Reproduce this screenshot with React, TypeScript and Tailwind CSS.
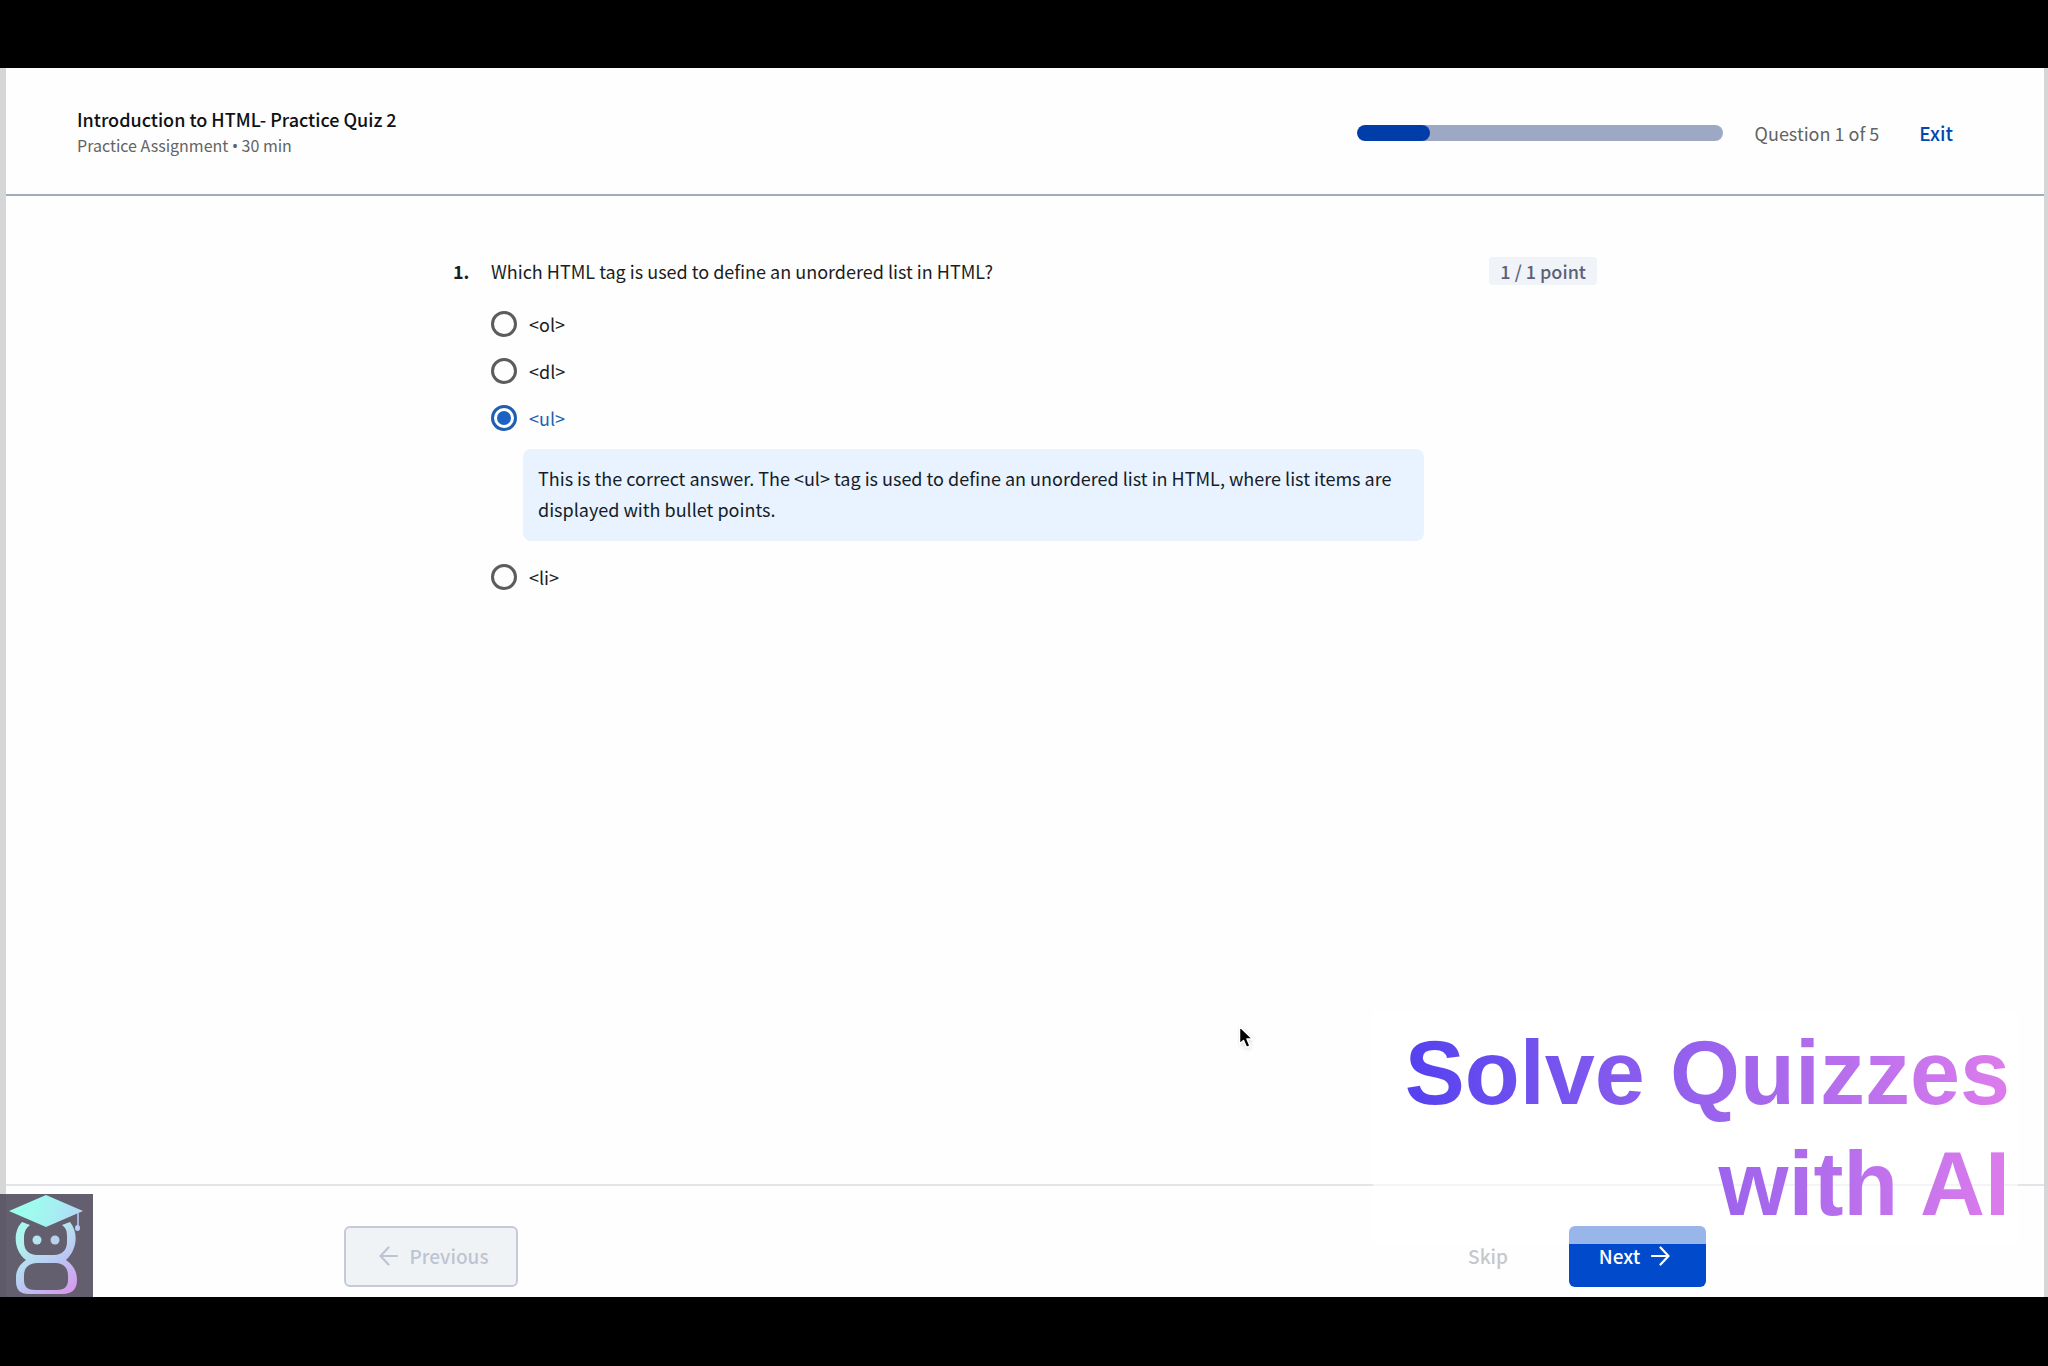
import React from "react";

type Option = { id: string; label: string; feedback?: string };

const OPTIONS: Option[] = [
  { id: "ol", label: "<ol>" },
  { id: "dl", label: "<dl>" },
  {
    id: "ul",
    label: "<ul>",
    feedback:
      "This is the correct answer. The <ul> tag is used to define an unordered list in HTML, where list items are displayed with bullet points.",
  },
  { id: "li", label: "<li>" },
];

function Arrow({ flip = false }: { flip?: boolean }) {
  return (
    <svg
      viewBox="0 0 20 20"
      className={flip ? "size-5 rotate-180" : "size-5"}
      fill="none"
      stroke="currentColor"
      strokeWidth="2.2"
      strokeLinecap="round"
      strokeLinejoin="round"
      aria-hidden="true"
    >
      <path d="M2 10H18M10.500 1.500L18.500 10L10.500 18.500" />
    </svg>
  );
}

function Header() {
  return (
    <header className="flex h-32 items-center justify-between border-b-2 border-[#a0abbb] pr-[91px] pl-[71px]">
      <div>
        <h1 className="leading-7 font-medium text-[#0f1114]">Introduction to HTML- Practice Quiz 2</h1>
        <p className="text-base leading-6 text-[#636363]">
          Practice Assignment <span className="font-['Noto_Sans',sans-serif]">•</span> 30 min
        </p>
      </div>
      <div className="flex items-center pt-1 leading-7">
        <div
          role="progressbar"
          aria-label="Quiz progress"
          aria-valuenow={1}
          aria-valuemin={0}
          aria-valuemax={5}
          className="h-4 w-[366px] overflow-hidden rounded-full bg-[#9ca8c4]"
        >
          <div className="h-full w-1/5 rounded-full bg-[#003da8]" />
        </div>
        <span className="ml-8 text-[#636363]">Question 1 of 5</span>
        <a href="#exit" className="ml-10 text-[19px] font-medium text-[#0048b0]">
          Exit
        </a>
      </div>
    </header>
  );
}

function Answer({ option, checked, onSelect }: { option: Option; checked: boolean; onSelect: () => void }) {
  return (
    <div>
      <label htmlFor={option.id} className={checked ? "flex items-center gap-3 text-[#1f5fb0]" : "flex items-center gap-3"}>
        <input
          id={option.id}
          type="radio"
          name="answer"
          checked={checked}
          onChange={onSelect}
          className="grid size-[26px] appearance-none place-items-center rounded-full border-[3px] border-[#5c5c5c] checked:border-[#1f5fb0] checked:before:size-3.5 checked:before:rounded-full checked:before:bg-[#1d61c4] checked:before:content-['']"
        />
        {option.label}
      </label>
      {option.feedback && (
        <p className="mt-4 mr-[173px] mb-1 ml-8 rounded-lg bg-[#e8f3ff] px-[15px] pt-3.5 pb-4 leading-[31px] text-[#161c28]">
          {option.feedback}
        </p>
      )}
    </div>
  );
}

function BotLogo() {
  return (
    <div className="absolute bottom-0 -left-1.5 h-[103px] w-[93px] bg-[#4d4759]/87">
      <svg viewBox="0 0 93 103" className="size-full" fill="none" role="img" aria-label="Graduate robot">
        <defs>
          <linearGradient id="bot" x1="20" y1="15" x2="80" y2="98" gradientUnits="userSpaceOnUse">
            <stop offset="0" stopColor="#a0fff0" />
            <stop offset="0.3" stopColor="#b2f1ee" />
            <stop offset="0.65" stopColor="#bcc4f4" />
            <stop offset="1" stopColor="#dc92ea" />
          </linearGradient>
          <linearGradient id="cap" x1="25" y1="10" x2="84" y2="30" gradientUnits="userSpaceOnUse">
            <stop offset="0" stopColor="#9cffed" />
            <stop offset="0.5" stopColor="#a6eef2" />
            <stop offset="1" stopColor="#b8d0fa" />
          </linearGradient>
        </defs>
        <path d="M9 17L46 1L83 17L46 33Z" fill="url(#cap)" />
        <path d="M78 19V33" stroke="#bccdfa" strokeWidth="1.5" />
        <ellipse cx="77.500" cy="34" rx="2.500" ry="3" fill="#bccdfa" />
        <path
          d="M22 28L30 31C25 35 24 39 24 45V48C24 56 29 61 37 61H54C62 61 67 56 67 48V42C67 37 66 34 62 31L70 28C79 39 77 56 66 66C73 71 77 77 77 86C77 95 72 100 63 100H29C20 100 16 96 16 87V83C16 76 20 70 26 66C13 56 13 37 22 28ZM37 69C29 69 24 74 24 81V86C24 93 28 96 35 96H57C65 96 68 92 68 86V81C68 74 63 69 56 69Z"
          fill="url(#bot)"
          fillRule="evenodd"
        />
        <circle cx="37" cy="46" r="4.500" fill="#b5e5ee" />
        <circle cx="55" cy="46" r="4.500" fill="#b9d1ef" />
      </svg>
    </div>
  );
}

export default function App() {
  const [selected, setSelected] = React.useState("ul");

  return (
    <div className="flex min-h-screen flex-col bg-black pt-[68px] pb-[69px] font-['Noto_Sans_CJK_SC','Noto_Sans',sans-serif] text-[18px] leading-[30px] text-[#1b1d21]">
      <div className="relative flex flex-1 flex-col border-r-4 border-l-[6px] border-[#d6d6d8] bg-[#fefefe]">
        <Header />
        <main className="mx-auto w-full max-w-[1144px] flex-1 pt-[60px]">
          <fieldset aria-labelledby="question" className="grid grid-cols-[38px_1fr]">
            <span className="font-bold">1.</span>
            <div className="flex items-center justify-between">
              <p id="question">Which HTML tag is used to define an unordered list in HTML?</p>
              <span className="rounded bg-[#f0f3f8] px-[11px] leading-7 font-medium text-[#5b6078]">1 / 1 point</span>
            </div>
            <div className="col-start-2 mt-[23px] flex flex-col gap-[17px]">
              {OPTIONS.map((option) => (
                <Answer
                  key={option.id}
                  option={option}
                  checked={selected === option.id}
                  onSelect={() => setSelected(option.id)}
                />
              ))}
            </div>
          </fieldset>
        </main>
        <footer className="flex h-[113px] border-t-2 border-[#e3e4e7] pt-10">
          <div className="mx-auto flex h-[61px] w-full max-w-[1362px] items-stretch justify-between text-[19px] font-medium">
            <button
              type="button"
              disabled
              className="flex w-[174px] items-center justify-center gap-2.5 rounded-md border-2 border-[#c5cad6] bg-[#f0f3f6] pb-0.5 pl-1.5 text-[#bfc4d2]"
            >
              <Arrow flip />
              Previous
            </button>
            <div className="flex gap-[61px]">
              <button type="button" className="pb-0.5 text-[#c5c7cc]">
                Skip
              </button>
              <button
                type="button"
                className="flex w-[137px] items-center justify-center gap-2.5 rounded-md bg-[#004acb] pr-1.5 pb-0.5 text-white"
              >
                Next
                <Arrow />
              </button>
            </div>
          </div>
        </footer>
        <div className="absolute right-[26px] bottom-[53px] bg-white/60 pt-2 pr-2 pb-1 pl-8 text-right">
          <p className="bg-linear-to-r from-[#5540f0] via-[#a065ec] via-55% to-[#dd7cec] bg-clip-text font-['Liberation_Sans',sans-serif] text-[90px] leading-[111px] font-bold text-transparent">
            Solve Quizzes
            <br />
            with AI
          </p>
        </div>
        <svg viewBox="0 0 16 26" className="absolute bottom-[246px] left-[1232px] h-[26px] w-4" aria-hidden="true">
          <path
            d="M1.500 1.500V19L5.500 15.500L8.500 22.500L12 21L9 14H14.500Z"
            fill="#000"
            stroke="#fff"
            strokeWidth="1.500"
            strokeLinejoin="round"
            className="drop-shadow-sm"
          />
        </svg>
        <BotLogo />
      </div>
    </div>
  );
}
